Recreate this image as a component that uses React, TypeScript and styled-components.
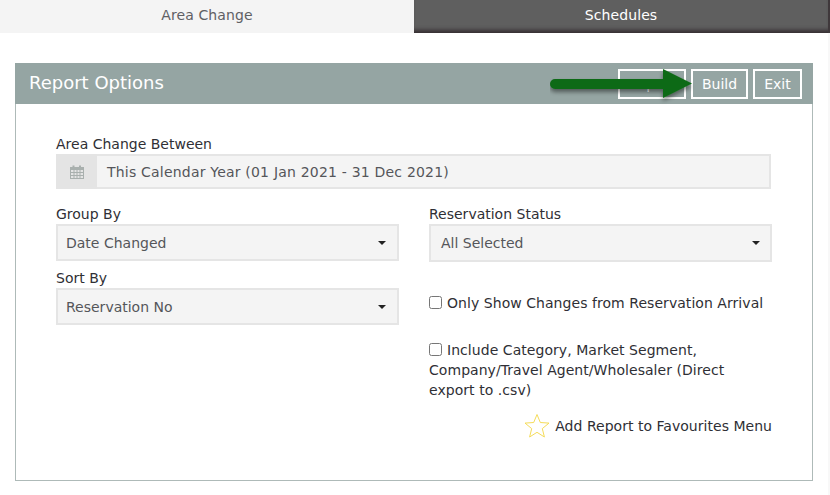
import React from "react"
import styled, { createGlobalStyle } from "styled-components"

const GlobalStyle = createGlobalStyle`
  html, body {
    margin: 0;
    padding: 0;
    background: #fff;
  }
  body {
    font-family: "DejaVu Sans", Verdana, sans-serif;
    font-size: 14px;
    color: #2f2f35;
  }
  * {
    box-sizing: border-box;
  }
`

const Caret = () => (
  <CaretIcon viewBox="0 0 8 4">
    <path d="M0 0h8L4 4z" fill="#222" />
  </CaretIcon>
)

const SelectBox = ({ value, wide }: { value: string; wide?: boolean }) => (
  <Select $wide={wide}>
    <span>{value}</span>
    <Caret />
  </Select>
)

export default function App() {
  return (
    <Page>
      <GlobalStyle />
      <Tabs>
        <Tab $active>Area Change</Tab>
        <Tab>Schedules</Tab>
      </Tabs>

      <Panel>
        <PanelHeader>
          <PanelTitle>Report Options</PanelTitle>
          <Actions>
            <ActionButton $width={68}>Export</ActionButton>
            <ActionButton $width={57}>Build</ActionButton>
            <ActionButton $width={49}>Exit</ActionButton>
          </Actions>
          <Arrow viewBox="0 0 150 46">
            <defs>
              <filter id="arrowShadow" x="-10%" y="-30%" width="120%" height="180%">
                <feDropShadow dx="0" dy="3" stdDeviation="2" floodColor="#000" floodOpacity="0.45" />
              </filter>
            </defs>
            <path
              d="M5 19h108V9l29 14.500L113 38V29H5a5 5 0 0 1 0-10z"
              fill="#0b6a17"
              filter="url(#arrowShadow)"
            />
          </Arrow>
        </PanelHeader>

        <PanelBody>
          <FullField>
            <Label>Area Change Between</Label>
            <DateInput>
              <DateAddon>
                <svg width="14" height="14" viewBox="0 0 14 14">
                  <path
                    d="M0 2h2.500V0.500h2V2h4.500V0.500h2V2H14v12H0zM1 5v2h2.500V5zm3.500 0v2h2V5zm3 0v2h2V5zm3 0v2H13V5zM1 8v2h2.500V8zm3.500 0v2h2V8zm3 0v2h2V8zm3 0v2H13V8zM1 11v2h2.500v-2zm3.500 0v2h2v-2zm3 0v2h2v-2zm3 0v2H13v-2z"
                    fill="#a9b0ae"
                    fillRule="evenodd"
                  />
                </svg>
              </DateAddon>
              <DateValue>This Calendar Year (01 Jan 2021 - 31 Dec 2021)</DateValue>
            </DateInput>
          </FullField>

          <Columns>
            <Column>
              <Field>
                <Label>Group By</Label>
                <SelectBox value="Date Changed" />
              </Field>
              <Field>
                <Label>Sort By</Label>
                <SelectBox value="Reservation No" />
              </Field>
            </Column>

            <Column>
              <Field>
                <Label>Reservation Status</Label>
                <SelectBox value="All Selected" wide />
              </Field>
              <CheckRow $top={22}>
                <Check type="checkbox" />
                Only Show Changes from Reservation Arrival
              </CheckRow>
              <CheckRow $top={27}>
                <Check type="checkbox" />
                Include Category, Market Segment, Company/Travel Agent/Wholesaler (Direct export to .csv)
              </CheckRow>
              <Favourite>
                <svg width="28" height="28" viewBox="0 0 28 28">
                  <path
                    d="M14 2.500l3.300 8 8.700.6-6.700 5.500 2.100 8.400L14 20.300l-7.400 4.700 2.100-8.400L2 11.100l8.700-.6z"
                    fill="#fff"
                    stroke="#f5dc5a"
                    strokeWidth="1"
                  />
                </svg>
                <FavouriteText>Add Report to Favourites Menu</FavouriteText>
              </Favourite>
            </Column>
          </Columns>
        </PanelBody>
      </Panel>
    </Page>
  )
}

// --- styled components ---

const Page = styled.div`
  width: 830px;
  height: 495px;
  overflow: hidden;
  background: linear-gradient(to right, #fff 828px, #f8f8f8 828px);
`

const Tabs = styled.div`
  display: grid;
  grid-template-columns: 414px 416px;
  height: 33px;
`

const Tab = styled.div<{ $active?: boolean }>`
  display: flex;
  align-items: center;
  justify-content: center;
  padding: 0 0 3px 0;
  letter-spacing: 0.1px;
  color: ${p => (p.$active ? "#5f6064" : "#fff")};
  background: ${p => (p.$active ? "#f4f4f4" : "#5f5f5f")};
  border-right: ${p => (p.$active ? "none" : "2px solid #3f383b")};
  box-shadow: ${p => (p.$active ? "none" : "inset 0 -6px 4px -3px #352d31")};
`

const Panel = styled.section`
  width: 798px;
  height: 418px;
  margin: 30px 0 0 15px;
  border: 1px solid #aebab8;
  border-top: none;
`

const PanelHeader = styled.header`
  position: relative;
  display: flex;
  align-items: center;
  justify-content: space-between;
  height: 41px;
  margin: 0 -1px 0 -1px;
  padding: 0 11px 0 14px;
  background: #95a5a3;
`

const PanelTitle = styled.h2`
  margin: 0 0 2px;
  font-size: 18px;
  font-weight: 400;
  color: #fff;
`

const Actions = styled.div`
  display: flex;
  gap: 5px;
`

const ActionButton = styled.button<{ $width: number }>`
  width: ${p => p.$width}px;
  height: 30px;
  padding: 0;
  border: 2px solid #fff;
  background: transparent;
  color: #fff;
  font: inherit;
  font-size: 14px;
`

const Arrow = styled.svg`
  position: absolute;
  left: 535px;
  top: -3px;
  width: 150px;
  height: 46px;
`

const PanelBody = styled.div`
  padding: 32px 41px 0 40px;
`

const FullField = styled.div`
  display: flex;
  flex-direction: column;
`

const Label = styled.label`
  display: block;
  height: 17px;
  margin-bottom: 1px;
  line-height: 17px;
`

const DateInput = styled.div`
  display: flex;
  height: 35px;
  border: 2px solid #e5e5e5;
  background: #f4f4f4;
`

const DateAddon = styled.div`
  display: flex;
  align-items: center;
  justify-content: center;
  width: 41px;
  margin: -2px 0 -2px -2px;
  background: #e4e4e4;
`

const DateValue = styled.div`
  display: flex;
  align-items: center;
  padding: 0 0 0 10px;
  letter-spacing: 0.2px;
  color: #55565a;
`

const Columns = styled.div`
  display: grid;
  grid-template-columns: 343px 343px;
  column-gap: 30px;
  margin-top: 17px;
`

const Column = styled.div`
  display: flex;
  flex-direction: column;
`

const Field = styled.div`
  margin-bottom: 9px;
`

const Select = styled.div<{ $wide?: boolean }>`
  display: flex;
  align-items: center;
  justify-content: space-between;
  height: ${p => (p.$wide ? 38 : 37)}px;
  padding: 0 ${p => (p.$wide ? 10 : 11)}px 0 ${p => (p.$wide ? 10 : 8)}px;
  border: 2px solid #e5e5e5;
  background: #f4f4f4;
  color: #55565a;
`

const CaretIcon = styled.svg`
  width: 8px;
  height: 4px;
`

const CheckRow = styled.label<{ $top: number }>`
  display: block;
  margin-top: ${p => p.$top}px;
  line-height: 20px;
  letter-spacing: 0.05px;
`

const Check = styled.input`
  width: 13px;
  height: 13px;
  margin: 0 5px 0 0;
  vertical-align: -1px;
`

const Favourite = styled.div`
  display: flex;
  align-items: center;
  justify-content: flex-end;
  gap: 4px;
  margin-top: 12px;
`

const FavouriteText = styled.span`
  letter-spacing: 0.03px;
`
